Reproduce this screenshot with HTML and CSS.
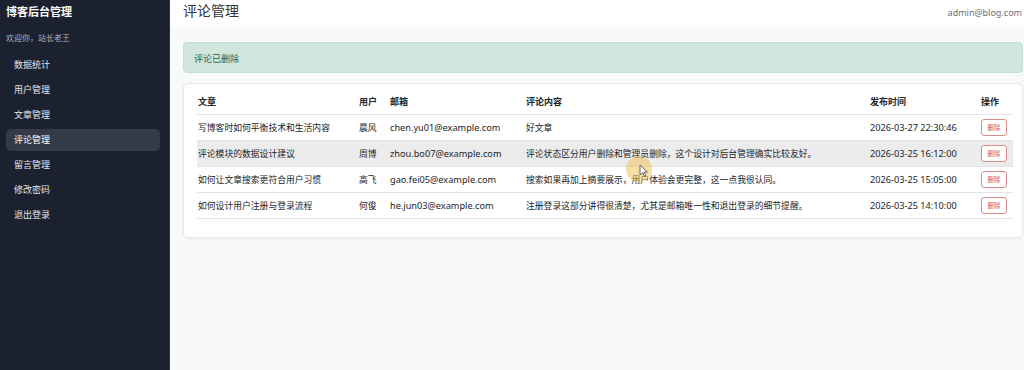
FILE: index.html
```html
<!DOCTYPE html>
<html lang="zh-CN">
<head>
    <meta charset="UTF-8">
    <title>评论管理</title>
    <link rel="stylesheet" href="styles.css">
</head>
<body>
    <div class="layout">
        <aside class="sidebar">
            <div class="brand">博客后台管理</div>
            <div class="welcome">欢迎你，站长老王</div>
            <nav class="nav">
                <a class="nav-item">数据统计</a>
                <a class="nav-item">用户管理</a>
                <a class="nav-item">文章管理</a>
                <a class="nav-item active">评论管理</a>
                <a class="nav-item">留言管理</a>
                <a class="nav-item">修改密码</a>
                <a class="nav-item">退出登录</a>
            </nav>
        </aside>
        <main class="main">
            <header class="topbar">
                <h1 class="page-title">评论管理</h1>
                <span class="user">admin@blog.com</span>
            </header>
            <div class="content">
                <div class="alert">评论已删除</div>
                <div class="card">
                    <table class="table">
                        <thead>
                            <tr>
                                <th class="col-title">文章</th>
                                <th class="col-user">用户</th>
                                <th class="col-mail">邮箱</th>
                                <th class="col-body">评论内容</th>
                                <th class="col-time">发布时间</th>
                                <th class="col-op">操作</th>
                            </tr>
                        </thead>
                        <tbody>
                            <tr>
                                <td>写博客时如何平衡技术和生活内容</td>
                                <td>晨风</td>
                                <td class="latin">chen.yu01@example.com</td>
                                <td>好文章</td>
                                <td class="latin">2026-03-27 22:30:46</td>
                                <td><button class="btn-del">删除</button></td>
                            </tr>
                            <tr class="hover">
                                <td>评论模块的数据设计建议</td>
                                <td>周博</td>
                                <td class="latin">zhou.bo07@example.com</td>
                                <td class="cursor-cell">评论状态区分用户删除和管理员删除，这个设计对后台管理确实比较友好。<span class="cursor"><svg width="10" height="13" viewBox="0 0 10 13"><path d="M1 1 L1 11 L3.5 8.6 L5.3 12.4 L6.8 11.7 L5 8 L8.4 8 Z" fill="#fff" stroke="#555" stroke-width="0.9" stroke-linejoin="round"/></svg></span></td>
                                <td class="latin">2026-03-25 16:12:00</td>
                                <td><button class="btn-del">删除</button></td>
                            </tr>
                            <tr>
                                <td>如何让文章搜索更符合用户习惯</td>
                                <td>高飞</td>
                                <td class="latin">gao.fei05@example.com</td>
                                <td>搜索如果再加上摘要展示，用户体验会更完整，这一点我很认同。</td>
                                <td class="latin">2026-03-25 15:05:00</td>
                                <td><button class="btn-del">删除</button></td>
                            </tr>
                            <tr>
                                <td>如何设计用户注册与登录流程</td>
                                <td>何俊</td>
                                <td class="latin">he.jun03@example.com</td>
                                <td>注册登录这部分讲得很清楚，尤其是邮箱唯一性和退出登录的细节提醒。</td>
                                <td class="latin">2026-03-25 14:10:00</td>
                                <td><button class="btn-del">删除</button></td>
                            </tr>
                        </tbody>
                    </table>
                </div>
            </div>
        </main>
    </div>
</body>
</html>
```

FILE: styles.css
```css
* {
    box-sizing: border-box;
}
body {
    margin: 0;
    padding: 0;
    height: 370px;
    overflow: hidden;
    font-family: "Segoe UI", "Noto Sans", "Noto Sans CJK SC", sans-serif;
    color: #212529;
    background-color: #f8f9fb;
}
.layout {
    display: flex;
    height: 370px;
}
.sidebar {
    width: 170px;
    flex-shrink: 0;
    background-color: #1c2130;
    border-right: 1px solid #2c3140;
    padding: 4px 9px 0 6px;
    color: #e6e8ec;
}
.brand {
    font-size: 11px;
    font-weight: bold;
    color: #ffffff;
    line-height: 16px;
    margin-bottom: 12px;
}
.welcome {
    font-size: 8px;
    color: #aeb4bf;
    line-height: 12px;
    margin-bottom: 10px;
}
.nav {
    display: flex;
    flex-direction: column;
    gap: 3px;
}
.nav-item {
    display: block;
    height: 22px;
    line-height: 22px;
    padding-left: 8px;
    font-size: 9px;
    color: #e3e6eb;
    border-radius: 5px;
}
.nav-item.active {
    background-color: #353a47;
    color: #ffffff;
}
.main {
    flex: 1;
    min-width: 0;
    display: flex;
    flex-direction: column;
}
.topbar {
    height: 27px;
    background-color: #ffffff;
    display: flex;
    align-items: flex-start;
    justify-content: space-between;
    padding: 0 2px 0 13px;
}
.page-title {
    margin: 3px 0 0;
    font-size: 14px;
    line-height: 16px;
    font-weight: normal;
    color: #333333;
}
.user {
    font-size: 9px;
    color: #6c6f75;
    margin-top: 6px;
}
.content {
    padding: 15px 1px 0 13px;
}
.alert {
    height: 31px;
    line-height: 31px;
    padding-left: 10px;
    background-color: #d1e7dd;
    border: 1px solid #c3e0d2;
    border-radius: 4px;
    color: #2e5d47;
    font-size: 9px;
    margin-bottom: 10px;
}
.card {
    background-color: #ffffff;
    border: 1px solid #e6e7ea;
    border-radius: 5px;
    box-shadow: 0 1px 3px rgba(0, 0, 0, 0.06);
    padding: 6px 9px 18px 13px;
}
.table {
    width: 100%;
    border-collapse: collapse;
    font-size: 8.8px;
}
.table th {
    text-align: left;
    font-weight: bold;
    font-size: 9px;
    height: 24px;
    padding: 0 4px 0 1px;
    border-bottom: 1px solid #e3e4e6;
}
.table td {
    height: 26px;
    padding: 0 4px 0 1px;
    border-bottom: 1px solid #e3e4e6;
    white-space: nowrap;
}
.col-title { width: 161px; }
.col-user { width: 31px; }
.col-mail { width: 136px; }
.col-body { width: 344px; }
.col-time { width: 111px; }
.table tr.hover td {
    background-color: #ececec;
}
.latin {
    font-size: 9.2px;
}
.btn-del {
    font-family: "Noto Sans CJK SC", sans-serif;
    font-size: 6.5px;
    color: #d9534f;
    background-color: #ffffff;
    border: 1px solid #dc8d8b;
    border-radius: 3px;
    width: 26px;
    height: 17px;
    padding: 0;
    line-height: 15px;
}
.cursor-cell {
    position: relative;
}
.cursor {
    position: absolute;
    left: 101px;
    top: 15px;
    width: 26px;
    height: 26px;
    border-radius: 50%;
    background-color: rgba(240, 190, 80, 0.5);
    padding: 8px 0 0 13px;
    pointer-events: none;
}
.cursor svg {
    display: block;
}
```
